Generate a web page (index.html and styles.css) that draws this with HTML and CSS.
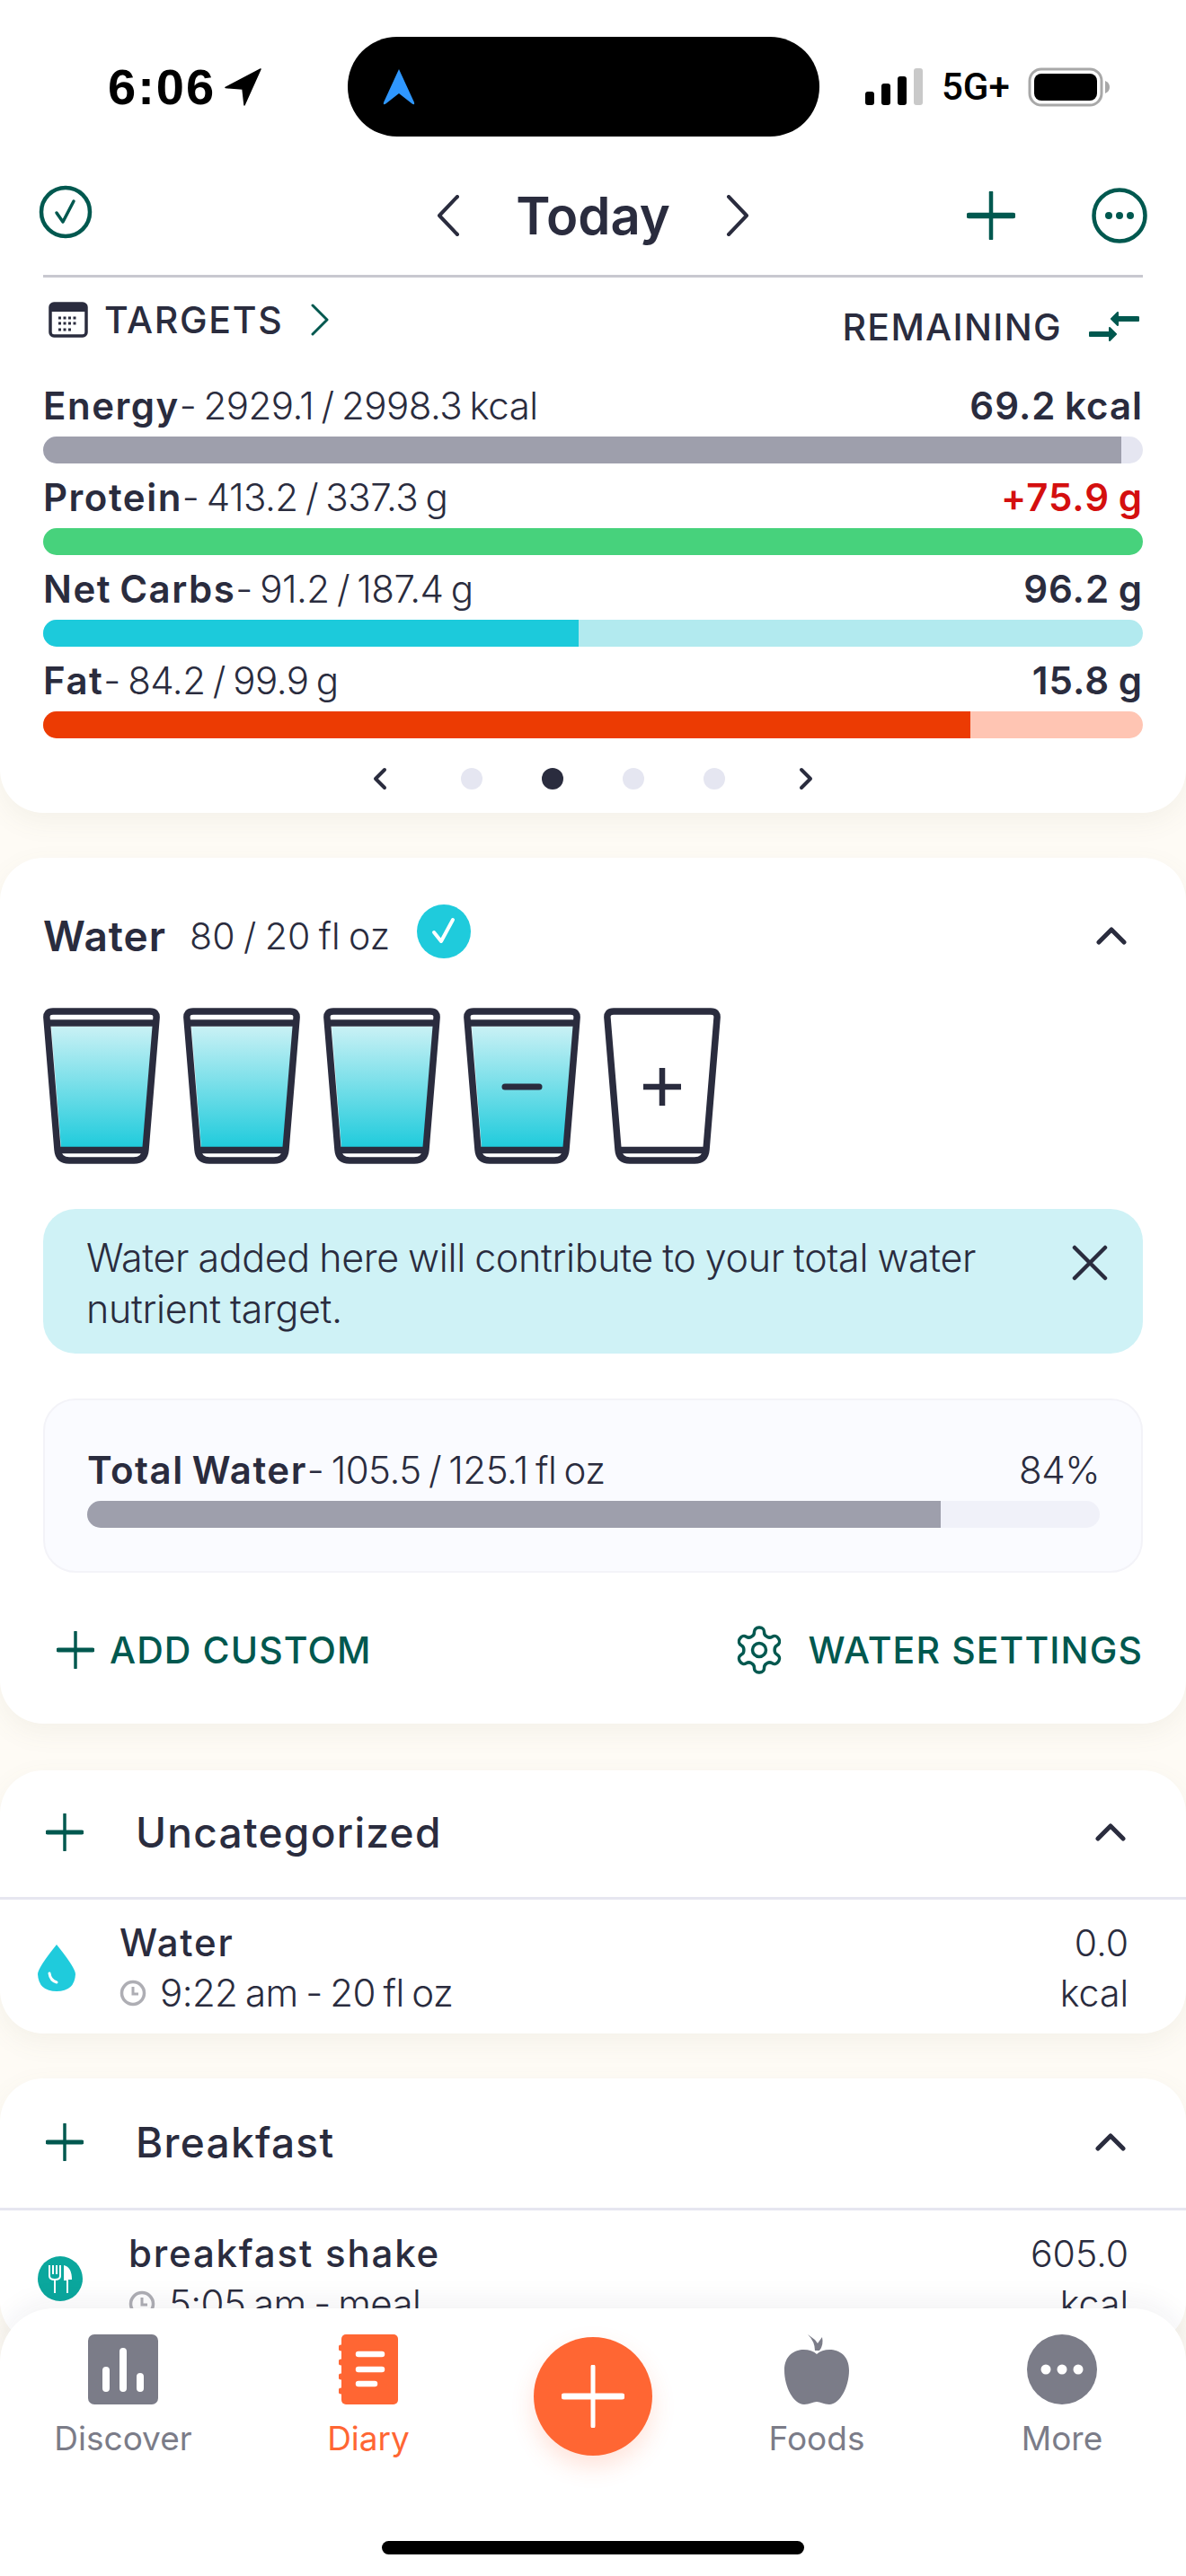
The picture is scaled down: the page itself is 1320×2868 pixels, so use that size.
FILE: index.html
```html
<!DOCTYPE html>
<html lang="en">
<head>
    <meta charset="UTF-8">
    <meta name="viewport" content="width=device-width, initial-scale=1.0">
    <title>Diary</title>
    <link rel="stylesheet" href="styles.css">
</head>
<body>
    <svg class="defs" width="0" height="0">
        <defs>
            <linearGradient id="waterFill" x1="0" y1="0" x2="0" y2="1">
                <stop offset="0" stop-color="#c9f1f5"/>
                <stop offset="1" stop-color="#1fcbdc"/>
            </linearGradient>
            <symbol id="glassFull" viewBox="0 0 130 174">
                <polygon points="9,21 122,21 111,156 20,156" fill="url(#waterFill)"/>
                <path d="M11 4H119Q127 4 126 12L114 158Q113 170 101 170H29Q17 170 16 158L4 12Q3 4 11 4Z" fill="none" stroke="#2a2c3e" stroke-width="7.500"/>
                <path d="M6 17H124M16 158.500H114" stroke="#2a2c3e" stroke-width="7.500"/>
            </symbol>
            <symbol id="plusIcon" viewBox="0 0 42 42">
                <path d="M21 1V41" stroke="#00584f" stroke-width="3.500" stroke-linecap="round"/>
                <path d="M2 21H40" stroke="#00584f" stroke-width="5" stroke-linecap="round"/>
            </symbol>
            <symbol id="chevUp" viewBox="0 0 34 20">
                <path d="M3 17L17 3L31 17" fill="none" stroke="#2a2c3e" stroke-width="5" stroke-linecap="round" stroke-linejoin="round"/>
            </symbol>
            <symbol id="clockIcon" viewBox="0 0 30 30">
                <circle cx="15" cy="15" r="12.500" fill="none" stroke="#aeaeb4" stroke-width="3.500"/>
                <path d="M15 8V16H21" fill="none" stroke="#aeaeb4" stroke-width="3"/>
            </symbol>
        </defs>
    </svg>

    <div class="phone">
        <div class="card card-top">
            <div class="status">
                <div class="status-left">
                    <span class="clock">6:06</span>
                    <svg width="42" height="42" viewBox="0 0 42 42"><path d="M40 1L1 21.500L20 23L22 41Z" fill="#000" stroke="#000" stroke-width="1.500" stroke-linejoin="round"/></svg>
                </div>
                <div class="island">
                    <svg width="38" height="42" viewBox="0 0 38 42"><path d="M19 1L36 38Q37 42 33 39L19 28L5 39Q1 42 2 38Z" fill="#2f97ff"/></svg>
                </div>
                <div class="status-right">
                    <svg width="64" height="42" viewBox="0 0 64 42">
                        <rect x="0" y="26" width="10" height="15" rx="3" fill="#000"/>
                        <rect x="18" y="17" width="10" height="24" rx="3" fill="#000"/>
                        <rect x="36" y="9" width="10" height="32" rx="3" fill="#000"/>
                        <rect x="54" y="0" width="10" height="41" rx="3" fill="#c9c9c9"/>
                    </svg>
                    <span class="net">5G+</span>
                    <svg width="92" height="44" viewBox="0 0 92 44">
                        <rect x="2" y="2" width="80" height="40" rx="13" fill="none" stroke="#a8a8a8" stroke-width="3"/>
                        <rect x="7" y="7" width="70" height="30" rx="8" fill="#000"/>
                        <path d="M86 15Q91 17 91 22Q91 27 86 29Z" fill="#a8a8a8"/>
                    </svg>
                </div>
            </div>

            <div class="topbar">
                <div class="topbar-left">
                    <svg width="60" height="60" viewBox="0 0 60 60"><circle cx="30" cy="30" r="27" fill="none" stroke="#00584f" stroke-width="4.500"/><path d="M20 31L27 41L39 18" fill="none" stroke="#00584f" stroke-width="3.500" stroke-linecap="round" stroke-linejoin="round"/></svg>
                </div>
                <div class="date-nav">
                    <svg width="26" height="46" viewBox="0 0 26 46"><path d="M23 2L3 23L23 44" fill="none" stroke="#2a2c3e" stroke-width="4" stroke-linecap="round" stroke-linejoin="round"/></svg>
                    <span class="today">Today</span>
                    <svg width="26" height="46" viewBox="0 0 26 46"><path d="M3 2L23 23L3 44" fill="none" stroke="#2a2c3e" stroke-width="4" stroke-linecap="round" stroke-linejoin="round"/></svg>
                </div>
                <div class="topbar-right">
                    <svg width="54" height="54" viewBox="0 0 42 42"><use href="#plusIcon"/></svg>
                    <svg width="62" height="62" viewBox="0 0 62 62"><circle cx="31" cy="31" r="28.500" fill="none" stroke="#00584f" stroke-width="4.500"/><circle cx="19" cy="31" r="4" fill="#00584f"/><circle cx="31" cy="31" r="4" fill="#00584f"/><circle cx="43" cy="31" r="4" fill="#00584f"/></svg>
                </div>
            </div>

            <div class="targets">
                <div class="targets-left">
                    <svg width="44" height="40" viewBox="0 0 44 40">
                        <rect x="2" y="2" width="40" height="36" rx="4" fill="#fff" stroke="#2a2c3e" stroke-width="3.500"/>
                        <rect x="2" y="2" width="40" height="9" fill="#2a2c3e"/>
                        <path d="M11 18H33M11 24H33M11 31H25" stroke="#2a2c3e" stroke-width="3" stroke-dasharray="3 2.500"/>
                    </svg>
                    <span>TARGETS</span>
                    <svg class="targets-chev" width="22" height="36" viewBox="0 0 22 36"><path d="M3 2L19 18L3 34" fill="none" stroke="#00584f" stroke-width="3" stroke-linecap="round" stroke-linejoin="round"/></svg>
                </div>
                <div class="targets-right">
                    <span>REMAINING</span>
                    <svg width="56" height="34" viewBox="0 0 56 34">
                        <path d="M54 8H30M2 25H24" stroke="#00584f" stroke-width="6" stroke-linecap="round"/>
                        <path d="M25 8L32 1V15ZM30 25L23 18V32Z" fill="#00584f" stroke="#00584f" stroke-width="2" stroke-linejoin="round"/>
                    </svg>
                </div>
            </div>

            <div class="macro">
                <div class="macro-text"><span><b>Energy</b>- 2929.1 / 2998.3 kcal</span><strong>69.2 kcal</strong></div>
                <div class="bar bar-energy"><div class="bar-fill" style="width: 98%"></div></div>
            </div>
            <div class="macro">
                <div class="macro-text"><span><b>Protein</b>- 413.2 / 337.3 g</span><strong class="over">+75.9 g</strong></div>
                <div class="bar bar-protein"><div class="bar-fill" style="width: 100%"></div></div>
            </div>
            <div class="macro">
                <div class="macro-text"><span><b>Net Carbs</b>- 91.2 / 187.4 g</span><strong>96.2 g</strong></div>
                <div class="bar bar-carbs"><div class="bar-fill" style="width: 48.7%"></div></div>
            </div>
            <div class="macro">
                <div class="macro-text"><span><b>Fat</b>- 84.2 / 99.9 g</span><strong>15.8 g</strong></div>
                <div class="bar bar-fat"><div class="bar-fill" style="width: 84.3%"></div></div>
            </div>

            <div class="pager">
                <svg class="pager-prev" width="18" height="26" viewBox="0 0 18 26"><path d="M14 3L4 13L14 23" fill="none" stroke="#2a2c3e" stroke-width="4" stroke-linecap="round" stroke-linejoin="round"/></svg>
                <span class="dot"></span>
                <span class="dot active"></span>
                <span class="dot"></span>
                <span class="dot"></span>
                <svg class="pager-next" width="18" height="26" viewBox="0 0 18 26"><path d="M4 3L14 13L4 23" fill="none" stroke="#2a2c3e" stroke-width="4" stroke-linecap="round" stroke-linejoin="round"/></svg>
            </div>
        </div>

        <div class="card card-water">
            <div class="water-head">
                <span class="water-title">Water</span>
                <span class="water-amount">80 / 20 fl oz</span>
                <svg class="water-check" width="60" height="60" viewBox="0 0 60 60"><circle cx="30" cy="30" r="30" fill="#1fcbdc"/><path d="M19 31L27 41L40 17" fill="none" stroke="#fff" stroke-width="4" stroke-linecap="round" stroke-linejoin="round"/></svg>
                <svg class="push-right" width="34" height="20" viewBox="0 0 34 20"><use href="#chevUp"/></svg>
            </div>

            <div class="glasses">
                <svg class="glass" viewBox="0 0 130 174"><use href="#glassFull"/></svg>
                <svg class="glass" viewBox="0 0 130 174"><use href="#glassFull"/></svg>
                <svg class="glass" viewBox="0 0 130 174"><use href="#glassFull"/></svg>
                <svg class="glass" viewBox="0 0 130 174">
                    <use href="#glassFull"/>
                    <path d="M46 88H84" stroke="#2a2c3e" stroke-width="7" stroke-linecap="round"/>
                </svg>
                <svg class="glass" viewBox="0 0 130 174">
                    <path d="M11 4H119Q127 4 126 12L114 158Q113 170 101 170H29Q17 170 16 158L4 12Q3 4 11 4Z" fill="none" stroke="#2a2c3e" stroke-width="7.500"/>
                    <path d="M16 158.500H114" stroke="#2a2c3e" stroke-width="7.500"/>
                    <path d="M44 88H86M65 67V109" stroke="#2a2c3e" stroke-width="6.500"/>
                </svg>
            </div>

            <div class="note">
                <p>Water added here will contribute to your total water nutrient target.</p>
                <svg width="40" height="40" viewBox="0 0 40 40"><path d="M3 3L37 37M37 3L3 37" stroke="#2a2c3e" stroke-width="4.500" stroke-linecap="round"/></svg>
            </div>

            <div class="total">
                <div class="macro-text total-text"><span><b>Total Water</b>- 105.5 / 125.1 fl oz</span><span>84%</span></div>
                <div class="bar bar-total"><div class="bar-fill" style="width: 84.3%"></div></div>
            </div>

            <div class="actions">
                <div class="action action-add">
                    <svg width="42" height="42" viewBox="0 0 42 42"><use href="#plusIcon"/></svg>
                    <span>ADD CUSTOM</span>
                </div>
                <div class="action action-settings">
                    <svg width="60" height="60" viewBox="0 0 24 24" fill="none" stroke="#00584f" stroke-width="1.400"><path d="M12.220 2h-.44a2 2 0 0 0-2 2v.18a2 2 0 0 1-1 1.730l-.43.25a2 2 0 0 1-2 0l-.15-.08a2 2 0 0 0-2.730.73l-.22.38a2 2 0 0 0 .73 2.730l.15.1a2 2 0 0 1 1 1.720v.51a2 2 0 0 1-1 1.740l-.15.09a2 2 0 0 0-.73 2.730l.22.38a2 2 0 0 0 2.730.73l.15-.08a2 2 0 0 1 2 0l.43.25a2 2 0 0 1 1 1.730V20a2 2 0 0 0 2 2h.44a2 2 0 0 0 2-2v-.18a2 2 0 0 1 1-1.730l.43-.25a2 2 0 0 1 2 0l.15.08a2 2 0 0 0 2.730-.73l.22-.39a2 2 0 0 0-.73-2.730l-.15-.08a2 2 0 0 1-1-1.740v-.5a2 2 0 0 1 1-1.740l.15-.09a2 2 0 0 0 .73-2.730l-.22-.38a2 2 0 0 0-2.730-.73l-.15.08a2 2 0 0 1-2 0l-.43-.25a2 2 0 0 1-1-1.730V4a2 2 0 0 0-2-2z"/><circle cx="12" cy="12" r="3"/></svg>
                    <span>WATER SETTINGS</span>
                </div>
            </div>
        </div>

        <div class="card card-meal">
            <div class="meal-head">
                <svg width="42" height="42" viewBox="0 0 42 42"><use href="#plusIcon"/></svg>
                <span class="meal-title">Uncategorized</span>
                <svg class="push-right" width="34" height="20" viewBox="0 0 34 20"><use href="#chevUp"/></svg>
            </div>
            <div class="entry">
                <svg class="entry-icon" width="42" height="52" viewBox="0 0 42 52"><path d="M21 0Q42 26 42 33Q41 52 21 52Q1 52 0 33Q0 26 21 0Z" fill="#1fcbdc"/><path d="M13 32Q14 40 21 42" fill="none" stroke="#fff" stroke-width="3" stroke-linecap="round"/></svg>
                <div class="entry-main">
                    <div class="entry-name">Water</div>
                    <div class="entry-sub"><svg width="30" height="30" viewBox="0 0 30 30"><use href="#clockIcon"/></svg>9:22 am - 20 fl oz</div>
                </div>
                <div class="entry-cal">0.0<br>kcal</div>
            </div>
        </div>

        <div class="card card-meal card-breakfast">
            <div class="meal-head">
                <svg width="42" height="42" viewBox="0 0 42 42"><use href="#plusIcon"/></svg>
                <span class="meal-title">Breakfast</span>
                <svg class="push-right" width="34" height="20" viewBox="0 0 34 20"><use href="#chevUp"/></svg>
            </div>
            <div class="entry">
                <svg class="entry-icon entry-icon-meal" width="50" height="50" viewBox="0 0 50 50">
                    <circle cx="25" cy="25" r="25" fill="#0ba79d"/>
                    <path d="M13 10V22Q13 26 19 26Q25 26 25 22V10M17 10V20M21 10V20M19 26V41" fill="none" stroke="#fff" stroke-width="2"/>
                    <path d="M29 10Q38 12 38 26H34V41H32V27H29Z" fill="#fff"/>
                </svg>
                <div class="entry-main">
                    <div class="entry-name">breakfast shake</div>
                    <div class="entry-sub"><svg width="30" height="30" viewBox="0 0 30 30"><use href="#clockIcon"/></svg>5:05 am - meal</div>
                </div>
                <div class="entry-cal">605.0<br>kcal</div>
            </div>
        </div>

        <nav class="tabbar">
            <div class="tab">
                <svg width="78" height="78" viewBox="0 0 78 78"><rect width="78" height="78" rx="7" fill="#7b7c88"/><path d="M20 40V60M39 19V60M58 47V60" stroke="#fff" stroke-width="8" stroke-linecap="round"/></svg>
                <span>Discover</span>
            </div>
            <div class="tab tab-active">
                <svg width="66" height="78" viewBox="0 0 66 78">
                    <rect x="3" y="0" width="63" height="78" rx="5" fill="#ff6633"/>
                    <circle cx="3" cy="15" r="3.500" fill="#ff6633"/><circle cx="3" cy="31" r="3.500" fill="#ff6633"/><circle cx="3" cy="47" r="3.500" fill="#ff6633"/><circle cx="3" cy="63" r="3.500" fill="#ff6633"/>
                    <path d="M22 22H48M22 39H48M22 55H40" stroke="#fff" stroke-width="6.500" stroke-linecap="round"/>
                </svg>
                <span>Diary</span>
            </div>
            <div class="fab-wrap">
                <div class="fab"><svg width="70" height="70" viewBox="0 0 70 70"><path d="M35 2V68" stroke="#fff" stroke-width="5" stroke-linecap="round"/><path d="M3 35H67" stroke="#fff" stroke-width="7" stroke-linecap="round"/></svg></div>
            </div>
            <div class="tab">
                <svg width="72" height="78" viewBox="0 0 72 78">
                    <path d="M36 22C46 13 72 15 72 40C72 58 62 78 50 78C44 78 40 75 36 75C32 75 28 78 22 78C10 78 0 58 0 40C0 15 26 13 36 22Z" fill="#7b7c88"/>
                    <path d="M34 18Q34 8 26 0L34 6L37 10L42 3Q44 12 39 18Z" fill="#7b7c88"/>
                </svg>
                <span>Foods</span>
            </div>
            <div class="tab">
                <svg width="78" height="78" viewBox="0 0 78 78"><circle cx="39" cy="39" r="39" fill="#7b7c88"/><circle cx="21" cy="39" r="5.500" fill="#fff"/><circle cx="39" cy="39" r="5.500" fill="#fff"/><circle cx="57" cy="39" r="5.500" fill="#fff"/></svg>
                <span>More</span>
            </div>
            <div class="home-bar"></div>
        </nav>
    </div>
</body>
</html>
```

FILE: styles.css
```css
* {
    margin: 0;
    padding: 0;
    box-sizing: border-box;
    font-family: Inter, "Noto Sans", sans-serif;
}
body {
    background: #fefbf5;
    color: #2a2c3e;
}
svg {
    display: block;
    flex-shrink: 0;
}
.defs {
    position: absolute;
}
.phone {
    position: relative;
    width: 1320px;
    height: 2868px;
    overflow: hidden;
    background: #fefbf5;
}
.card {
    background: #fff;
    border-radius: 48px;
    box-shadow: 0 10px 30px rgba(120, 110, 80, 0.07);
}
.card-top {
    border-radius: 0 0 48px 48px;
    padding: 0 48px 26px;
}

/* status bar */
.status {
    display: flex;
    align-items: center;
    height: 152px;
    padding-top: 41px;
    margin: 0 -48px;
}
.status-left {
    display: flex;
    align-items: center;
    gap: 10px;
    width: 387px;
    padding-left: 120px;
}
.clock {
    font-family: "Liberation Sans", sans-serif;
    font-size: 56px;
    font-weight: 700;
    letter-spacing: 2px;
    color: #000;
}
.island {
    display: flex;
    align-items: center;
    width: 525px;
    height: 111px;
    padding-left: 38px;
    background: #000;
    border-radius: 55px;
}
.status-right {
    display: flex;
    align-items: center;
    padding-left: 51px;
}
.net {
    width: 117px;
    padding-left: 21px;
    font-family: Roboto, sans-serif;
    font-size: 42px;
    font-weight: 500;
    color: #000;
}

/* date row */
.topbar {
    display: grid;
    grid-template-columns: 1fr auto 1fr;
    align-items: center;
    height: 80px;
    margin-top: 48px;
}
.topbar-left {
    margin-left: -5px;
    margin-top: -8px;
}
.date-nav {
    display: flex;
    align-items: center;
    gap: 62px;
}
.today {
    font-size: 58px;
    font-weight: 600;
    line-height: 80px;
}
.topbar-right {
    display: flex;
    align-items: center;
    justify-content: flex-end;
    gap: 85px;
    margin-right: -5px;
}
.targets {
    display: flex;
    justify-content: space-between;
    height: 121px;
    padding-top: 26px;
    border-top: 3px solid #c8c8d0;
    margin-top: 26px;
}
.targets-left,
.targets-right {
    display: flex;
    align-items: center;
    height: 42px;
    font-size: 41px;
    font-weight: 500;
    letter-spacing: 1.700px;
}
.targets-left {
    gap: 18px;
    margin-left: 6px;
}
.targets-chev {
    margin-left: 12px;
}
.targets-right {
    gap: 30px;
    margin-top: 8px;
    margin-right: 4px;
    letter-spacing: 1.300px;
}

/* macro rows */
.macro {
    margin-bottom: 13px;
}
.macro-text {
    display: flex;
    justify-content: space-between;
    font-size: 42px;
    font-weight: 300;
    letter-spacing: -0.5px;
    word-spacing: -3px;
    line-height: 50px;
    margin-bottom: 9px;
}
.macro-text b {
    font-weight: 600;
    letter-spacing: 1.500px;
}
.macro-text strong {
    font-weight: 600;
    letter-spacing: 1px;
    word-spacing: -2px;
}
.over {
    color: #d40f0f;
}
.bar {
    height: 30px;
    border-radius: 15px;
    overflow: hidden;
}
.bar-fill {
    height: 100%;
}
.bar-energy {
    background: #e5e6f1;
}
.bar-energy .bar-fill,
.bar-total .bar-fill {
    background: #9e9fac;
}
.bar-protein {
    background: #c8f0d7;
}
.bar-protein .bar-fill {
    background: #47d27c;
}
.bar-carbs {
    background: #b2eaef;
}
.bar-carbs .bar-fill {
    background: #1ccadb;
}
.bar-fat {
    background: #ffc5b3;
}
.bar-fat .bar-fill {
    background: #ec3b03;
}
.pager {
    display: flex;
    align-items: center;
    gap: 66px;
    justify-content: center;
    height: 24px;
    margin-top: 33px;
}
.pager-prev {
    margin-right: 15px;
}
.pager-next {
    margin-left: 15px;
}
.dot {
    width: 24px;
    height: 24px;
    border-radius: 50%;
    background: #e5e6f1;
}
.dot.active {
    background: #2a2c3e;
}

/* water card */
.card-water {
    margin-top: 50px;
    padding: 52px 48px 57px;
}
.water-head {
    display: flex;
    align-items: center;
    height: 70px;
}
.water-title {
    font-size: 46px;
    font-weight: 600;
    letter-spacing: 1px;
}
.water-amount {
    margin-left: 26px;
    margin-right: 30px;
    font-size: 41px;
    font-weight: 300;
    word-spacing: -2px;
}
.water-check {
    margin-top: -10px;
}
.push-right {
    margin-left: auto;
    margin-right: 18px;
}
.glasses {
    display: flex;
    gap: 26px;
    margin-top: 45px;
}
.glass {
    width: 130px;
    height: 174px;
}
.note {
    display: flex;
    justify-content: space-between;
    gap: 40px;
    height: 161px;
    margin-top: 50px;
    padding: 26px 39px 0 48px;
    background: #cff2f6;
    border-radius: 36px;
    font-size: 43px;
    font-weight: 300;
    letter-spacing: -0.35px;
    word-spacing: -1.400px;
    line-height: 57px;
}
.note svg {
    margin-top: 14px;
}
.total {
    height: 194px;
    margin-top: 50px;
    padding: 53px 46px 0 47px;
    background: #fafbff;
    border: 2px solid #f3f3f8;
    border-radius: 36px;
}
.bar-total {
    background: #f0f1f9;
}
.actions {
    display: flex;
    justify-content: space-between;
    margin-top: 61px;
    height: 50px;
}
.action {
    display: flex;
    align-items: center;
    font-size: 41px;
    font-weight: 500;
    color: #00584f;
    letter-spacing: 1.100px;
}
.action-add {
    gap: 17px;
    margin-left: 15px;
}
.action-settings {
    gap: 24px;
}

/* meal cards */
.card-meal {
    margin-top: 52px;
}
.meal-head {
    display: flex;
    align-items: center;
    height: 144px;
    padding: 0 49px 3px 51px;
    border-bottom: 3px solid #e6e6f0;
}
.meal-title {
    margin-left: 58px;
    font-size: 46px;
    font-weight: 500;
    letter-spacing: 1.300px;
}
.meal-head .push-right {
    margin-right: 18px;
}
.entry {
    display: flex;
    align-items: center;
    height: 149px;
    padding: 2px 64px 0 42px;
}
.entry-main {
    margin-left: 49px;
    flex: 1;
}
.entry-name {
    font-size: 42px;
    font-weight: 500;
    letter-spacing: 1.800px;
    line-height: 56px;
}
.entry-sub {
    display: flex;
    align-items: center;
    gap: 15px;
    font-size: 42px;
    font-weight: 300;
    letter-spacing: -0.6px;
    word-spacing: -2.500px;
    line-height: 56px;
}
.entry-cal {
    font-size: 41px;
    font-weight: 300;
    line-height: 56px;
    text-align: right;
}
.card-breakfast {
    margin-top: 50px;
}
.card-breakfast .meal-head {
    height: 147px;
}
.entry-icon-meal + .entry-main {
    margin-left: 51px;
}

/* tab bar */
.tabbar {
    position: absolute;
    left: 0;
    right: 0;
    bottom: 0;
    display: grid;
    grid-template-columns: 274px 272px 228px 270px 276px;
    align-items: start;
    height: 298px;
    padding-top: 29px;
    background: #fff;
    border-radius: 60px 60px 0 0;
    box-shadow: 0 -8px 30px rgba(40, 40, 60, 0.06);
}
.tab {
    display: flex;
    flex-direction: column;
    align-items: center;
    gap: 15px;
    font-size: 37px;
    line-height: 46px;
    font-weight: 400;
    color: #7b7c88;
}
.tab-active {
    color: #ff6633;
}
.fab-wrap {
    display: flex;
    justify-content: center;
    padding-top: 3px;
}
.fab {
    display: flex;
    align-items: center;
    justify-content: center;
    width: 132px;
    height: 132px;
    border-radius: 50%;
    background: #ff6633;
    box-shadow: 0 12px 26px rgba(255, 102, 51, 0.18);
}
.home-bar {
    position: absolute;
    left: 425px;
    bottom: 24px;
    width: 470px;
    height: 15px;
    background: #000;
    border-radius: 8px;
}
```
